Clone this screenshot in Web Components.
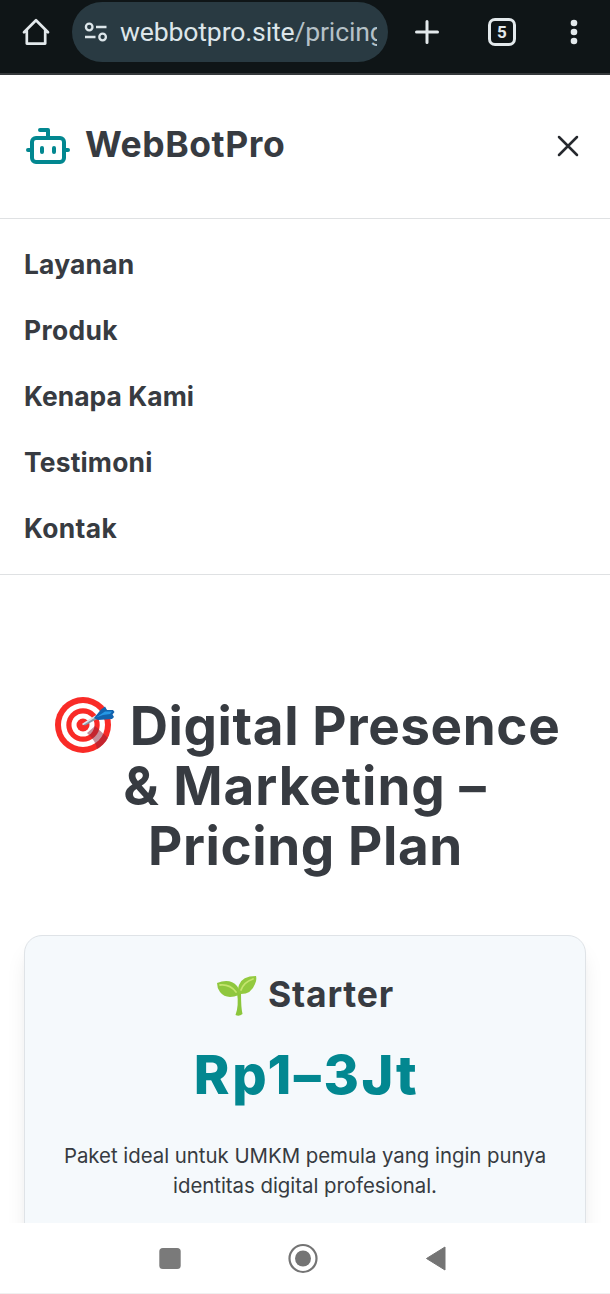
<!DOCTYPE html>
<html lang="id">
<head>
<meta charset="utf-8">
<title>WebBotPro – Pricing</title>
<style>
html,body{margin:0;padding:0}
body{width:610px;height:1294px;overflow:hidden;background:#fff;color:#373b41;font-family:Inter,"Liberation Sans",sans-serif}
</style>
</head>
<body>
<phone-screen>
  <browser-bar slot="top" domain="webbotpro.site" path="/pricing" tabs="5"></browser-bar>
  <site-header slot="top">WebBotPro</site-header>
  <site-menu slot="top">
    <menu-link style="letter-spacing:.2px">Layanan</menu-link>
    <menu-link style="letter-spacing:.35px">Produk</menu-link>
    <menu-link style="letter-spacing:.05px">Kenapa Kami</menu-link>
    <menu-link style="letter-spacing:.2px">Testimoni</menu-link>
    <menu-link style="letter-spacing:.35px">Kontak</menu-link>
  </site-menu>
  <page-title>
    <title-line style="letter-spacing:.6px;padding-left:3px"><target-icon></target-icon><span>Digital Presence</span></title-line>
    <title-line style="letter-spacing:.95px">&amp; Marketing –</title-line>
    <title-line style="letter-spacing:.6px;padding-left:1px">Pricing Plan</title-line>
  </page-title>
  <plan-card>
    <sprout-icon slot="icon"></sprout-icon>
    <span slot="name">Starter</span>
    <span slot="price">Rp1–3Jt</span>
    <text-line>Paket ideal untuk UMKM pemula yang ingin punya</text-line>
    <text-line>identitas digital profesional.</text-line>
  </plan-card>
  <system-nav slot="bottom"></system-nav>
</phone-screen>
<script>
function define(name, html, setup) {
  customElements.define(name, class extends HTMLElement {
    constructor() {
      super();
      const root = this.attachShadow({ mode: 'open' });
      const t = document.createElement('template');
      t.innerHTML = html;
      root.appendChild(t.content.cloneNode(true));
      if (setup) setup(this, root);
    }
  });
}

define('phone-screen', `<style>
:host{display:flex;flex-direction:column;width:610px;height:1294px;overflow:hidden}
main{flex:1;min-height:0;overflow:hidden;padding:121px 24px 0}
</style><slot name="top"></slot><main><slot></slot></main><slot name="bottom"></slot>`);

define('browser-bar', `<style>
:host{display:flex;flex:none;box-sizing:border-box;height:75px;background:#0f1517;border-bottom:2px solid #35393b;padding-top:2px;color:#e3e9ec}
svg{display:block;flex:none}
.home{margin:15px 21px 0 21px}
.pill{display:flex;flex:none;align-items:center;box-sizing:border-box;width:316px;height:60px;border-radius:30px;background:#293a42;padding:0 11px 0 12px}
.url{flex:1;overflow:hidden;white-space:nowrap;margin-left:12px;font:400 26.600px/40px Roboto,sans-serif;letter-spacing:-.16px;color:#dde6ea}
.path{color:#b5c1c7}
.plus{width:26px;margin:17px 0 0 26px}
.tabs{flex:none;box-sizing:border-box;width:28px;height:28px;border:3px solid #e3e9ec;border-radius:7px;margin:16px 0 0 48px;font:700 17px/22px Roboto,sans-serif;text-align:center}
.dots{margin:17px 0 0 54px}
</style>
<svg class="home" width="30" height="30" viewBox="0 0 30 30" fill="none" stroke="#e3e9ec" stroke-width="2.700" stroke-linejoin="round" stroke-linecap="round"><path d="M3 15.200 15 3.300 27 15.200M5.800 13V26.600H24.200V13"/></svg>
<div class="pill">
<svg width="24" height="22" viewBox="0 0 24 22" fill="none" stroke="#dde6ea" stroke-width="2.300"><circle cx="5.200" cy="6" r="3.300"/><path d="M12 6H22.500M1 16H11.500"/><circle cx="18.600" cy="16" r="3.300"/></svg>
<div class="url"><span class="domain"></span><span class="path"></span></div></div>
<svg class="plus" width="26" height="26" viewBox="0 0 26 26" stroke="#e3e9ec" stroke-width="3" stroke-linecap="round"><path d="M13 2.500V23.500M2.500 13H23.500"/></svg>
<div class="tabs"></div>
<svg class="dots" width="8" height="28" viewBox="0 0 8 28" fill="#e3e9ec"><circle cx="4" cy="4" r="3.300"/><circle cx="4" cy="13" r="3.300"/><circle cx="4" cy="22" r="3.300"/></svg>`,
(el, root) => {
  root.querySelector('.domain').textContent = el.getAttribute('domain');
  root.querySelector('.path').textContent = el.getAttribute('path');
  root.querySelector('.tabs').textContent = el.getAttribute('tabs');
});

define('site-header', `<style>
:host{display:flex;flex:none;align-items:center;box-sizing:border-box;height:144px;border-bottom:1px solid #dfe1e3;padding:0 24px 2px;font-weight:700;font-size:35.500px;line-height:48px}
.name{margin:-2px 0 0 13px;flex:1;white-space:nowrap;letter-spacing:.55px}
svg{display:block;flex:none}
</style>
<svg width="48" height="48" viewBox="0 0 24 24" fill="none" stroke="#028790" stroke-width="2" stroke-linecap="round" stroke-linejoin="round"><path d="M12 8V4H8"/><rect width="16" height="12" x="4" y="8" rx="2"/><path d="M2 14h2M20 14h2M15 13v2M9 13v2"/></svg>
<span class="name"><slot></slot></span>
<svg width="36" height="36" viewBox="0 0 24 24" fill="none" stroke="#26292e" stroke-width="1.700" stroke-linecap="round"><path d="M18 6 6 18M6 6l12 12"/></svg>`);

define('site-menu', `<style>
:host{display:flex;flex-direction:column;flex:none;box-sizing:border-box;height:356px;border-bottom:1px solid #dfe1e3;padding:24px 24px 0;gap:24px}
</style><slot></slot>`);

define('menu-link', `<style>
:host{display:block;font-weight:700;font-size:26.400px;line-height:42px;height:42px;white-space:nowrap}
</style><slot></slot>`);

define('page-title', `<style>
:host{display:flex;flex-direction:column;align-items:center;font-weight:700;font-size:53px;line-height:60px}
</style><slot></slot>`);

define('title-line', `<style>
:host{display:flex;height:60px;white-space:pre}
</style><slot></slot>`);

define('target-icon', `<style>
:host{display:block;width:62px;height:60px;margin-right:15px}svg{display:block;margin-top:-1px}
</style><svg width="62" height="60" viewBox="0 0 62 60"><circle cx="30" cy="30" r="28" fill="#f92b27"/><circle cx="30" cy="30" r="22" fill="#fff"/><circle cx="30" cy="30" r="16.700" fill="#f92b27"/><circle cx="30" cy="30" r="11.500" fill="#fff"/><circle cx="30" cy="30" r="6.500" fill="#f92b27"/>
<path d="M34 38 42 31 55 43Q51 50 44 54Q43 46 34 38Z" fill="#8f2038" opacity=".5"/>
<path d="M29.500 29.500 43 20.500 45 23.500 32 30.500Z" fill="#8199a8"/><path d="M29.500 29.500 43 21" stroke="#d8e4eb" stroke-width="1.500"/>
<path d="M41 23 48 14.500 52 11.500 54 15 60 15 61.500 17 59.500 19.500 61 22 59 24 52 24.500 45 25Z" fill="#1263ae"/><path d="M43 22.500 52 16.500 59 16.500 57 19 50 20Z" fill="#2698e5"/></svg>`);

define('plan-card', `<style>
:host{display:flex;flex-direction:column;align-items:center;box-sizing:border-box;width:562px;height:420px;margin-top:59px;padding-top:35px;border:1.500px solid #dfe3e7;border-radius:18px;background:#f5f9fc;box-shadow:0 15px 22px -4px rgba(0,0,0,.1),0 6px 9px -6px rgba(0,0,0,.1)}
.name{display:flex;gap:10px;font-weight:700;font-size:35.500px;line-height:48px;height:48px;white-space:nowrap;letter-spacing:.8px}
.price{font-weight:850;font-size:54px;line-height:60px;margin-top:26px;padding-left:3px;color:#028790;white-space:nowrap;letter-spacing:2.600px}
.desc{display:flex;flex-direction:column;align-items:center;margin-top:36px;letter-spacing:-.02px}
</style><div class="name"><slot name="icon"></slot><slot name="name"></slot></div><div class="price"><slot name="price"></slot></div><div class="desc"><slot></slot></div>`);

define('text-line', `<style>:host{display:block;font-size:20.400px;line-height:30px;height:30px;white-space:nowrap}</style><slot></slot>`);

define('sprout-icon', `<style>:host{display:block;width:42px;height:48px}svg{display:block;margin-top:1px}</style>
<svg width="42" height="48" viewBox="0 0 42 48"><path d="M21 20Q23 20 25 21Q25 36 26.500 42Q23 45 19.500 43Q23 34 21 20Z" fill="#8cc63c"/><path d="M1 11Q14 6 21 14Q24 18 23 23Q10 28 4 20Q1 16 1 11Z" fill="#8fc73e"/><path d="M40 4Q26 4 23 13Q21 18 23 22Q35 23 39 12Q41 8 40 4Z" fill="#93ca3f"/><path d="M4 13Q14 12 20 20M37 7Q28 10 25 18" fill="none" stroke="#c5e56e" stroke-width="1.800" stroke-linecap="round"/></svg>`);

define('system-nav', `<style>
:host{display:flex;flex:none;box-sizing:border-box;height:71px;background:#fff;border-bottom:1px solid #f0f0f0;padding:19px 0 0 155px;gap:103px}
svg{display:block;width:30px;height:32px;flex:none}
</style>
<svg viewBox="0 0 30 32"><rect x="4.300" y="6" width="21.400" height="21" rx="3.500" fill="#7a7a7a"/></svg>
<svg viewBox="0 0 30 32"><circle cx="15" cy="16.500" r="13.500" fill="none" stroke="#747474" stroke-width="2.200"/><circle cx="15" cy="16.500" r="8" fill="#747474"/></svg>
<svg viewBox="0 0 30 32"><path d="M5.500 16.500 24 5V28Z" fill="#747474" stroke="#747474" stroke-width="1" stroke-linejoin="round"/></svg>`);
</script>
</body>
</html>
